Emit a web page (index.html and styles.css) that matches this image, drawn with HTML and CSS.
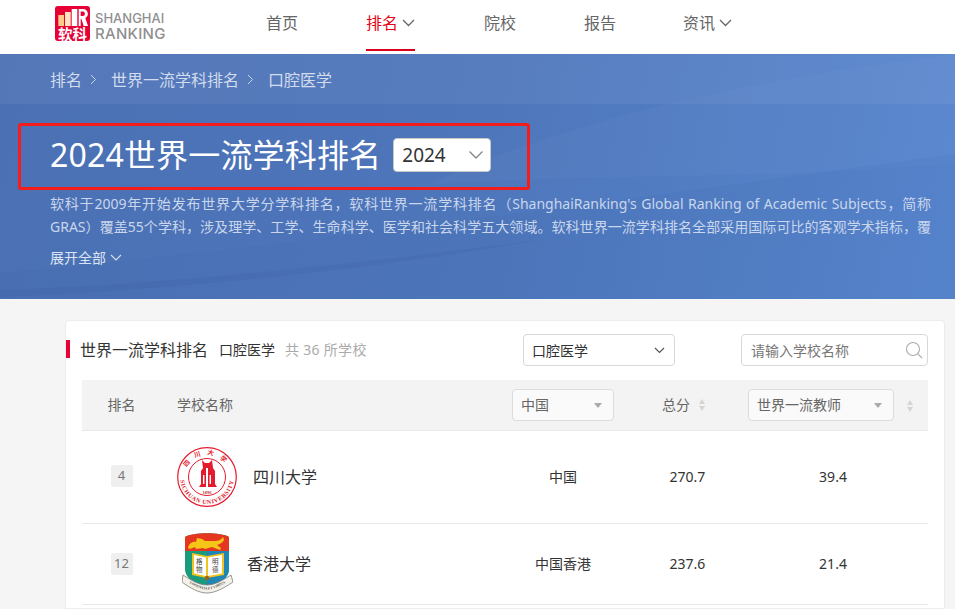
FILE: index.html
```html
<!DOCTYPE html>
<html lang="zh-CN">
<head>
<meta charset="utf-8">
<title>2024世界一流学科排名</title>
<link rel="stylesheet" href="styles.css">
</head>
<body>
<header class="topbar">
  <a class="logo">
    <span class="logo-mark">
      <svg class="logo-bars" width="35" height="21" viewBox="0 0 35 21">
        <rect x="3.300" y="9" width="5.700" height="11" fill="#ffc98a"/>
        <rect x="10" y="6" width="5.700" height="14" fill="#ffe3bd"/>
        <rect x="16.700" y="3" width="5.600" height="17" fill="#fff"/>
        <path d="M23.700 3H28a4.800 4.800 0 0 1 2.300 9L33 20h-4.300l-2.300-7h-.7v7h-2z" fill="#fff"/>
        <path d="M25.700 5.500h2a2.200 2.200 0 0 1 0 4.500h-2z" fill="#e60034"/>
      </svg>
      <span class="logo-cn">软科</span>
    </span>
    <span class="logo-en"><span>SHANGHAI</span><span>RANKING</span></span>
  </a>
  <nav class="nav">
    <a class="nav-item nav-home">首页</a>
    <a class="nav-item nav-rank active">排名 <svg class="chev" width="13" height="8" viewBox="0 0 13 8"><path d="M1 1l5.500 5.500L12 1" fill="none" stroke="#666" stroke-width="1.300"/></svg></a>
    <a class="nav-item nav-school">院校</a>
    <a class="nav-item nav-report">报告</a>
    <a class="nav-item nav-news">资讯 <svg class="chev" width="13" height="8" viewBox="0 0 13 8"><path d="M1 1l5.500 5.500L12 1" fill="none" stroke="#666" stroke-width="1.300"/></svg></a>
  </nav>
</header>

<section class="banner">
  <svg class="banner-art" width="955" height="245" viewBox="0 0 955 245" preserveAspectRatio="none">
    <path d="M0 0H955V50H0z" fill="#fff" opacity=".055"/>
    <path d="M430 130C560 70 720 30 955 0V110C760 125 600 120 430 130z" fill="#fff" opacity=".025"/>
    <path d="M0 245V219C220 200 520 160 955 100V245z" fill="#3d62a8" opacity=".1"/>
    <path d="M0 243C200 234 380 214 540 186 370 208 180 230 0 236z" fill="#3b5b99" opacity=".18"/>
  </svg>
  <div class="crumbs">
    <span>排名</span><svg class="crumb-sep" width="7" height="11" viewBox="0 0 7 11"><path d="M1 1l4.500 4.500L1 10" fill="none" stroke="#c9d6ea" stroke-width="1"/></svg>
    <span>世界一流学科排名</span><svg class="crumb-sep" width="7" height="11" viewBox="0 0 7 11"><path d="M1 1l4.500 4.500L1 10" fill="none" stroke="#c9d6ea" stroke-width="1"/></svg>
    <span>口腔医学</span>
  </div>
  <div class="title-row">
    <h1>2024世界一流学科排名</h1>
    <div class="year-select">
      <span>2024</span>
      <svg width="16" height="10" viewBox="0 0 16 10"><path d="M1.500 1.500L8 8l6.500-6.500" fill="none" stroke="#888" stroke-width="1.400"/></svg>
    </div>
  </div>
  <p class="intro">软科于2009年开始发布世界大学分学科排名，软科世界一流学科排名（ShanghaiRanking's Global Ranking of Academic Subjects，简称GRAS）覆盖55个学科，涉及理学、工学、生命科学、医学和社会科学五大领域。软科世界一流学科排名全部采用国际可比的客观学术指标，覆</p>
  <div class="expand">展开全部 <svg width="12" height="8" viewBox="0 0 12 8"><path d="M1 1l5 5 5-5" fill="none" stroke="#d5dfef" stroke-width="1.200"/></svg></div>
  <div class="highlight"></div>
</section>

<main class="content">
  <section class="card">
    <div class="card-head">
      <div class="card-title">
        <span class="title-main">世界一流学科排名</span>
        <span class="title-sub">口腔医学</span>
        <span class="title-count">共 36 所学校</span>
      </div>
      <div class="subject-select">
        <span>口腔医学</span>
        <svg width="11" height="7" viewBox="0 0 11 7"><path d="M1 1l4.500 4.500L10 1" fill="none" stroke="#555" stroke-width="1.200"/></svg>
      </div>
      <div class="search">
        <span>请输入学校名称</span>
        <svg width="18" height="18" viewBox="0 0 18 18"><circle cx="8" cy="8" r="6.500" fill="none" stroke="#aaa" stroke-width="1.100"/><path d="M12.800 12.800L17 17" stroke="#aaa" stroke-width="1.100"/></svg>
      </div>
    </div>

    <div class="table">
      <div class="row row-head">
        <div class="c-rank">排名</div>
        <div class="c-name">学校名称</div>
        <div class="c-region">
          <div class="mini-select region-select"><span>中国</span><i class="tri"></i></div>
        </div>
        <div class="c-score">总分<span class="sort"><i></i><i></i></span></div>
        <div class="c-index">
          <div class="mini-select index-select"><span>世界一流教师</span><i class="tri"></i></div>
          <span class="sort sort-end"><i></i><i></i></span>
        </div>
      </div>

      <div class="row row-a">
        <div class="c-rank"><span class="badge">4</span></div>
        <div class="c-name">
          <svg class="crest-a" width="60" height="60" viewBox="0 0 60 60">
            <circle cx="30" cy="30" r="29.300" fill="#fff" stroke="#e31b2c" stroke-width="1.200"/>
            <circle cx="30" cy="30" r="18.500" fill="#fff" stroke="#e31b2c" stroke-width="1"/>
            <path id="ring-b" d="M4.600 20.800A27 27 0 1 0 55.400 20.800" fill="none"/>
            <path id="ring-t" d="M8 30a22 22 0 0 1 44 0" fill="none"/>
            <text class="crest-en"><textPath href="#ring-b" startOffset="50%" text-anchor="middle">SICHUAN UNIVERSITY</textPath></text>
            <text class="crest-cn"><textPath href="#ring-t" startOffset="50%" text-anchor="middle">四川大学</textPath></text>
            <path d="M25 13l3 3h4l3-3 1 8 2 3v13l2 3H22l2-3V24l2-3z" fill="#e31b2c"/>
            <path d="M29 21h2v19h-2zM26 28h1.400v9H26zM32.600 28H34v9h-1.400z" fill="#fff"/>
            <text class="crest-year" x="30" y="46.500" text-anchor="middle">1896</text>
          </svg>
          <span class="school school-a">四川大学</span>
        </div>
        <div class="c-region">中国</div>
        <div class="c-score">270.7</div>
        <div class="c-index">39.4</div>
      </div>

      <div class="row row-b">
        <div class="c-rank"><span class="badge">12</span></div>
        <div class="c-name">
          <svg class="crest-b" width="51" height="61" viewBox="0 0 51 61">
            <path d="M3 4C11 -1 39 -1 47 4V36C47 46 35 52 25 57 15 52 3 46 3 36z" fill="#1c9b7c"/>
            <path d="M25 18H47V36C47 46 35 52 25 57z" fill="#1f86b6"/>
            <path d="M3 4C11 -1 39 -1 47 4V18H3z" fill="#e5361f"/>
            <path d="M6 15c1-5 5-7 8-6l1-4 5 1 3 2h10c3 0 6-1 8-4l1 3c-2 3-4 4-7 5l4 3-1 2-8-3-7 2-2-1-7 1-1-2-5 2z" fill="#f5c518"/>
            <path d="M10 20l15 3 17-3v22l-17 3-15-3z" fill="#f0c322"/>
            <path d="M12 22l12 2.500V43l-12-2.500zM40 22l-14 2.500V43l14-2.500z" fill="#fff"/>
            <text class="crest-book" x="14" y="31">格</text>
            <text class="crest-book" x="14" y="39">物</text>
            <text class="crest-book" x="30" y="31">明</text>
            <text class="crest-book" x="30" y="39">德</text>
            <circle cx="25" cy="45" r="2.200" fill="#a2601d"/>
            <path d="M1 42C9 47 17 52 25 52s16-5 24-10l2 7C42 55 33 60 25 60S8 55 0 49z" fill="#f4f1e8" stroke="#7d7d7d" stroke-width=".8"/>
            <path id="motto" d="M3 47.500C11 52.500 18 56.500 25 56.500s14-4 23-9" fill="none"/>
            <text class="crest-motto"><textPath href="#motto" startOffset="50%" text-anchor="middle">SAPIENTIA ET VIRTUS</textPath></text>
          </svg>
          <span class="school school-b">香港大学</span>
        </div>
        <div class="c-region">中国香港</div>
        <div class="c-score">237.6</div>
        <div class="c-index">21.4</div>
      </div>
    </div>
  </section>
</main>
</body>
</html>
```
FILE: styles.css
```css
* { box-sizing: border-box; }
html, body { margin: 0; height: 609px; overflow: hidden; }
body {
  background: #f5f5f5;
  font-family: "Noto Sans", "Noto Sans CJK SC", sans-serif;
  color: #333;
}
.topbar {
  height: 54px;
  background: #fff;
  display: flex;
  padding-left: 55px;
}
.logo { display: flex; align-items: flex-start; padding-top: 6px; gap: 5px; width: 110px; }
.logo-mark {
  flex: none;
  width: 35px;
  height: 35px;
  background: #e60034;
  border-radius: 3px;
  display: flex;
  flex-direction: column;
  align-items: center;
}
.logo-bars { flex: none; }
.logo-cn {
  color: #fff;
  font-size: 14.500px;
  line-height: 14px;
  font-weight: 700;
}
.logo-en {
  display: flex;
  flex-direction: column;
  color: #8f8f8f;
  font: 500 13px/15px "Inter", sans-serif;
  padding-top: 5px;
}
.logo-en span:last-child { font-size: 15px; line-height: 16px; letter-spacing: .3px; }
.nav { display: flex; height: 54px; margin-left: 101px; }
.nav-item {
  font-size: 16px;
  line-height: 47px;
  color: #666;
  height: 51px;
  white-space: nowrap;
}
.nav-home { width: 100px; }
.nav-rank { width: 118px; }
.nav-school { width: 100px; }
.nav-report { width: 99px; }
.nav-rank.active { color: #e60012; position: relative; }
.nav-rank.active::after {
  content: "";
  position: absolute;
  left: 0;
  bottom: 0;
  width: 49px;
  height: 2px;
  background: #d9001b;
}
.chev { vertical-align: 2px; }

.banner {
  position: relative;
  height: 245px;
  background: linear-gradient(102deg, #4b70b4 0%, #4e76bb 50%, #5887cf 100%);
  padding: 0 24px 0 50px;
  overflow: hidden;
  color: #fff;
}
.banner-art { position: absolute; left: 0; top: 0; }
.banner > div, .banner > p { position: relative; }
.crumbs {
  display: flex;
  align-items: center;
  height: 50px;
  font-size: 16px;
  color: #d2dcee;
}
.crumb-sep { margin: 0 14px 0 8px; }
.title-row {
  display: flex;
  align-items: center;
  margin-top: 26px;
  height: 50px;
}
.title-row h1 {
  margin: 0;
  font-size: 32px;
  line-height: 50px;
  font-weight: 400;
  letter-spacing: .17px;
  color: #fff;
}
.year-select {
  margin-left: 12px;
  width: 98px;
  height: 34px;
  background: #fff;
  border: 1px solid #c8c8c8;
  border-radius: 4px;
  display: flex;
  align-items: center;
  justify-content: space-between;
  padding: 0 6px 0 8px;
  font-size: 19px;
  color: #333;
}
.intro {
  margin: 12px 0 0;
  font-size: 14px;
  line-height: 23px;
  color: #c9d6ec;
  height: 46px;
  overflow: hidden;
  text-align: justify;
  text-align-last: justify;
}
.expand {
  margin-top: 9px;
  font-size: 14px;
  line-height: 22px;
  color: #dbe4f2;
  display: flex;
  align-items: center;
  gap: 4px;
}
.banner > .highlight {
  position: absolute;
  left: 18px;
  top: 69px;
  width: 512px;
  height: 67px;
  border: 3px solid #f51c1c;
  border-radius: 3px;
}

.content { padding: 21px 10px 0 65px; }
.card {
  background: #fff;
  border: 1px solid #ececec;
  border-radius: 4px 4px 0 0;
  padding: 0 16px;
  height: 289px;
  overflow: hidden;
}
.card-head {
  display: flex;
  align-items: center;
  height: 59px;
  padding-bottom: 1px;
}
.card-title {
  position: relative;
  width: 443px;
  display: flex;
  align-items: center;
  font-size: 14px;
  margin-left: -2px;
  padding-bottom: 2px;
}
.card-title::before {
  content: "";
  position: absolute;
  left: -14px;
  top: 3px;
  width: 4px;
  height: 18px;
  background: #e60034;
}
.title-main { color: #333; font-size: 16px; margin-right: 11px; }
.title-sub { color: #333; margin-right: 10px; }
.title-count { color: #aaa; font-size: 14px; letter-spacing: .3px; }
.subject-select {
  width: 152px;
  height: 32px;
  border: 1px solid #d8d8d8;
  border-radius: 4px;
  display: flex;
  align-items: center;
  justify-content: space-between;
  padding: 0 9px 0 8px;
  font-size: 14px;
  color: #333;
}
.search {
  margin-left: 66px;
  width: 187px;
  height: 32px;
  border: 1px solid #d8d8d8;
  border-radius: 4px;
  display: flex;
  align-items: center;
  justify-content: space-between;
  padding: 0 4px 0 9px;
  font-size: 14px;
  color: #777;
}
.row {
  display: grid;
  grid-template-columns: 79px 334px 136px 113px 1fr;
  align-items: center;
  font-size: 14px;
  color: #333;
  border-bottom: 1px solid #e8e8e8;
}
.row-head {
  height: 51px;
  background: #f3f3f3;
  color: #666;
}
.row-a { height: 93px; }
.row-b { height: 81px; }
.c-rank { text-align: center; padding-bottom: 2px; }
.c-name { padding-left: 16px; display: flex; align-items: center; }
.c-region { text-align: center; padding-bottom: 2px; }
.c-score { text-align: center; padding-bottom: 2px; }
.c-index { text-align: center; padding: 0 6px 2px 0; }
.row-head .c-name { padding-bottom: 2px; }
.row-head .c-region { display: flex; justify-content: center; padding: 0; }
.row-head .c-score { display: flex; justify-content: center; align-items: center; gap: 9px; padding: 0 8px 2px 0; }
.row-head .c-index { display: flex; align-items: center; padding: 0 0 0 4px; }
.mini-select {
  height: 32px;
  background: #fafafa;
  border: 1px solid #dcdcdc;
  border-radius: 4px;
  display: flex;
  align-items: center;
  justify-content: space-between;
  padding: 0 11px 2px 8px;
  color: #666;
}
.region-select { width: 102px; }
.index-select { width: 146px; }
.tri {
  width: 0;
  height: 0;
  margin-top: 2px;
  border-left: 4.500px solid transparent;
  border-right: 4.500px solid transparent;
  border-top: 5px solid #aaa;
}
.sort { display: inline-flex; flex-direction: column; gap: 2px; margin-top: 2px; }
.sort i {
  width: 0;
  height: 0;
  border-left: 3.500px solid transparent;
  border-right: 3.500px solid transparent;
}
.sort i:first-child { border-bottom: 5px solid #d4d4d4; }
.sort i:last-child { border-top: 5px solid #d4d4d4; }
.sort-end { margin-left: 13px; }
.badge {
  display: inline-block;
  min-width: 22px;
  height: 22px;
  padding: 0 3px;
  line-height: 21px;
  background: #efefef;
  border-radius: 2px;
  color: #777;
  font-size: 13px;
}
.row-b .badge { margin-top: 2px; }
.school { font-size: 16px; color: #333; margin-bottom: 2px; }
.school-a { margin-left: 16px; }
.school-b { margin-left: 14px; }
.crest-a { flex: none; }
.crest-b { flex: none; margin-left: 5px; margin-top: -1px; }
.crest-en { font: 700 6px "Liberation Serif", serif; fill: #e31b2c; letter-spacing: .6px; }
.crest-cn { font: 700 6.500px "Noto Sans CJK SC", sans-serif; fill: #e31b2c; letter-spacing: 6px; }
.crest-year { font: 700 4.500px "Liberation Serif", serif; fill: #b33; }
.crest-book { font: 400 6.500px "Noto Sans CJK SC", sans-serif; fill: #444; }
.crest-motto { font: 700 3.600px "Liberation Serif", serif; fill: #555; }
```
